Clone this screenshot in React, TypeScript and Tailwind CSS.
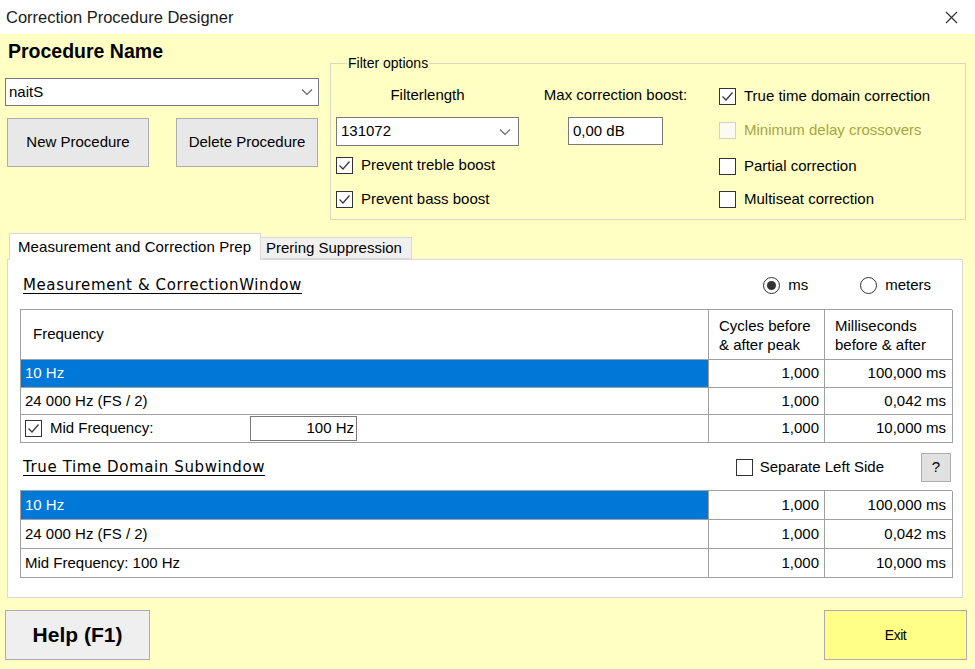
import React from "react";

function Check({ checked, disabled }: { checked?: boolean; disabled?: boolean }) {
  return (
    <span
      className={
        disabled
          ? "flex h-[17px] w-[17px] shrink-0 items-center justify-center border border-[#d2d2c8] bg-[#fbfbf3]"
          : "flex h-[17px] w-[17px] shrink-0 items-center justify-center border border-[#333333] bg-white"
      }
    >
      {checked && (
        <svg width="13" height="13" viewBox="0 0 13 13">
          <path d="M1.5 6.5 L5 10 L11.5 2.5" fill="none" stroke="#3a3a3a" strokeWidth="1.3" />
        </svg>
      )}
    </span>
  );
}

function Radio({ on }: { on?: boolean }) {
  return (
    <span className="flex h-[17px] w-[17px] shrink-0 items-center justify-center rounded-full border border-[#333333] bg-white">
      {on && <span className="h-[9px] w-[9px] rounded-full bg-[#333333]" />}
    </span>
  );
}

function Chevron() {
  return (
    <svg width="12" height="8" viewBox="0 0 12 8">
      <polyline points="1,1.5 6,6.5 11,1.5" fill="none" stroke="#666666" strokeWidth="1.2" />
    </svg>
  );
}

function CheckRow({ label, checked, disabled }: { label: string; checked?: boolean; disabled?: boolean }) {
  return (
    <div className="flex h-[20px] items-center gap-[8px]">
      <Check checked={checked} disabled={disabled} />
      <span className={disabled ? "text-[#a6a640]" : "text-black"}>{label}</span>
    </div>
  );
}

type RowProps = { first: React.ReactNode; c2: string; c3: string; selected?: boolean; h: string };

function Row({ first, c2, c3, selected, h }: RowProps) {
  return (
    <>
      <div
        className={
          (selected ? "bg-[#0078d7] text-white " : "bg-white text-black ") +
          "flex items-center border-r border-b border-[#a0a0a0] pl-[4px] " +
          h
        }
      >
        {first}
      </div>
      <div className={"flex items-center justify-end border-r border-b border-[#a0a0a0] bg-white pr-[5px] " + h}>{c2}</div>
      <div className={"flex items-center justify-end border-r border-b border-[#a0a0a0] bg-white pr-[6px] " + h}>{c3}</div>
    </>
  );
}

export default function App() {
  return (
    <div className="flex h-[669px] w-[975px] flex-col overflow-hidden font-['Liberation_Sans',Arial,sans-serif] text-[15px] text-black">
      {/* title bar */}
      <div className="flex h-[34px] shrink-0 items-center justify-between bg-white pl-[6px] pr-[17px]">
        <span className="text-[16.5px] text-[#1a1a1a]">Correction Procedure Designer</span>
        <svg width="13" height="13" viewBox="0 0 13 13">
          <path d="M1 1 L12 12 M12 1 L1 12" stroke="#333333" strokeWidth="1.2" />
        </svg>
      </div>

      {/* body */}
      <div className="flex flex-1 flex-col bg-[#ffffc4]">
        {/* top section */}
        <div className="flex h-[199px] shrink-0 items-start">
          <div className="flex w-[330px] shrink-0 flex-col pt-[6px]">
            <div className="pl-[8px] text-[19.5px] font-bold leading-[22px]">Procedure Name</div>
            <div className="ml-[5px] mt-[16px] flex h-[28px] w-[314px] items-center justify-between border border-[#7a7a7a] bg-white pl-[3px] pr-[5px]">
              <span>naitS</span>
              <Chevron />
            </div>
            <div className="mt-[12px] flex gap-[27px] pl-[7px]">
              <button className="h-[49px] w-[142px] border border-[#adadad] bg-[#e8e8e8] text-[15px]">New Procedure</button>
              <button className="h-[49px] w-[142px] border border-[#adadad] bg-[#e8e8e8] text-[15px]">Delete Procedure</button>
            </div>
          </div>

          <fieldset className="mt-[21px] flex h-[165px] w-[636px] shrink-0 border border-[#d8d8c4] pl-[5px]">
            <legend className="ml-[11px] px-[1px] text-[14px] leading-[16px]">Filter options</legend>
            <div className="flex">
              <div className="flex w-[183px] flex-col pt-[14px]">
                <div className="h-[20px] text-center leading-[20px]">Filterlength</div>
                <div className="mt-[12px] flex h-[29px] items-center justify-between border border-[#7a7a7a] bg-white pl-[4px] pr-[7px]">
                  <span>131072</span>
                  <Chevron />
                </div>
                <div className="mt-[9px]">
                  <CheckRow label="Prevent treble boost" checked />
                </div>
                <div className="mt-[14px]">
                  <CheckRow label="Prevent bass boost" checked />
                </div>
              </div>
              <div className="ml-[22px] flex w-[149px] flex-col items-center pt-[14px]">
                <div className="h-[20px] whitespace-nowrap leading-[20px]">Max correction boost:</div>
                <div className="mt-[12px] flex h-[28px] w-[95px] items-center border border-[#7a7a7a] bg-white pl-[4px]">0,00 dB</div>
              </div>
              <div className="ml-[29px] flex flex-col">
                <div className="mt-[15px]">
                  <CheckRow label="True time domain correction" checked />
                </div>
                <div className="mt-[14px]">
                  <CheckRow label="Minimum delay crossovers" disabled />
                </div>
                <div className="mt-[16px]">
                  <CheckRow label="Partial correction" />
                </div>
                <div className="mt-[13px]">
                  <CheckRow label="Multiseat correction" />
                </div>
              </div>
            </div>
          </fieldset>
        </div>

        {/* tabs */}
        <div className="ml-[7px] flex w-[956px] flex-col">
          <div className="flex items-end pl-[2px]">
            <div className="relative z-10 -mb-[1px] flex h-[27px] w-[252px] items-center border border-b-0 border-[#d9d9d9] bg-white pl-[8px] text-[15px] tracking-[0.1px]">
              Measurement and Correction Prep
            </div>
            <div className="flex h-[22px] w-[151px] items-center border border-l-0 border-[#d9d9d9] bg-[#f0f0f0] pl-[5px] text-[15px]">
              Prering Suppression
            </div>
          </div>
          <div className="flex h-[339px] flex-col border border-[#d9d9d9] bg-white pl-[12px] pr-[10px] pt-[16px]">
            <div className="flex h-[18px] items-center justify-between">
              <span className="pl-[3px] font-['DejaVu_Sans',sans-serif] text-[15px] tracking-[0.6px] underline underline-offset-[3px]">
                Measurement &amp; CorrectionWindow
              </span>
              <div className="flex items-center gap-[52px] pr-[21px]">
                <div className="flex items-center gap-[8px]">
                  <Radio on />
                  <span>ms</span>
                </div>
                <div className="flex items-center gap-[8px]">
                  <Radio />
                  <span>meters</span>
                </div>
              </div>
            </div>

            <div className="mt-[15px] grid grid-cols-[688px_116px_128px] border-l border-t border-[#a0a0a0]">
              <div className="flex h-[50px] items-center border-r border-b border-[#a0a0a0] pl-[12px]">Frequency</div>
              <div className="flex h-[50px] flex-col justify-center border-r border-b border-[#a0a0a0] pl-[10px] leading-[19px]">
                <span>Cycles before</span>
                <span>&amp; after peak</span>
              </div>
              <div className="flex h-[50px] flex-col justify-center border-r border-b border-[#a0a0a0] pl-[10px] leading-[19px]">
                <span>Milliseconds</span>
                <span>before &amp; after</span>
              </div>
              <Row first="10 Hz" c2="1,000" c3="100,000 ms" selected h="h-[28px]" />
              <Row first="24 000 Hz (FS / 2)" c2="1,000" c3="0,042 ms" h="h-[27px]" />
              <Row
                first={
                  <div className="flex items-center">
                    <Check checked />
                    <span className="ml-[8px] w-[200px]">Mid Frequency:</span>
                    <span className="flex h-[25px] w-[107px] items-center justify-end border border-[#7a7a7a] pr-[2px]">100 Hz</span>
                  </div>
                }
                c2="1,000"
                c3="10,000 ms"
                h="h-[28px]"
              />
            </div>

            <div className="mt-[10px] flex h-[29px] items-center justify-between">
              <span className="pl-[3px] font-['DejaVu_Sans',sans-serif] text-[15px] tracking-[0.6px] underline underline-offset-[3px]">
                True Time Domain Subwindow
              </span>
              <div className="flex items-center pr-[1px]">
                <Check />
                <span className="ml-[7px]">Separate Left Side</span>
                <button className="ml-[37px] h-[29px] w-[30px] border border-[#adadad] bg-[#e1e1e1] text-[15px]">?</button>
              </div>
            </div>

            <div className="mt-[8px] grid grid-cols-[688px_116px_128px] border-l border-t border-[#a0a0a0]">
              <Row first="10 Hz" c2="1,000" c3="100,000 ms" selected h="h-[29px]" />
              <Row first="24 000 Hz (FS / 2)" c2="1,000" c3="0,042 ms" h="h-[29px]" />
              <Row first="Mid Frequency: 100 Hz" c2="1,000" c3="10,000 ms" h="h-[29px]" />
            </div>
          </div>
        </div>

        {/* bottom buttons */}
        <div className="mt-[12px] flex justify-between pl-[5px] pr-[8px]">
          <button className="h-[50px] w-[145px] border border-[#adadad] bg-[#efefef] text-[21px] font-bold">Help (F1)</button>
          <button className="h-[50px] w-[143px] border border-[#adadad] bg-[#ffff88] text-[14px] tracking-[-0.5px]">Exit</button>
        </div>
      </div>
    </div>
  );
}
